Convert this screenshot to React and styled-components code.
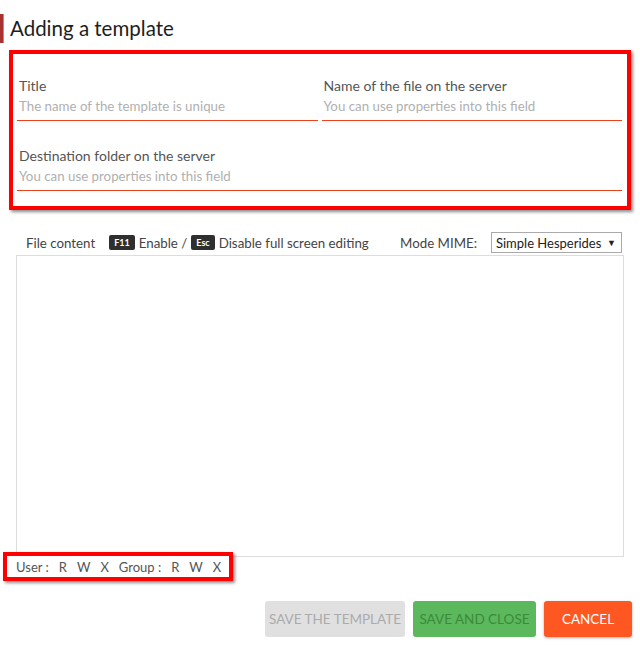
import styled, { createGlobalStyle } from 'styled-components';

const GlobalStyle = createGlobalStyle`
  html, body {
    margin: 0;
    padding: 0;
    background: #fff;
  }
  body {
    font-family: Lato, "Open Sans", sans-serif;
    color: #444;
  }
`;

const StyledDialog = styled.div`
  width: 640px;
  height: 645px;
  display: flex;
  flex-direction: column;
  box-sizing: border-box;
  overflow: hidden;
`;

const StyledHeader = styled.div`
  height: 50px;
  display: flex;
  align-items: flex-start;
  padding-top: 14px;
  box-sizing: border-box;
`;

const StyledMarker = styled.div`
  width: 3px;
  height: 29px;
  background: #a8322d;
  border-right: 1px solid #999;
  margin-right: 6px;
`;

const StyledTitle = styled.h1`
  margin: 0;
  font-size: 20.5px;
  font-weight: 400;
  color: #1e1e1e;
  line-height: 28px;
`;

const StyledHighlight = styled.div`
  border: 4px solid #ff0000;
  box-shadow: 2px 2px 3px rgba(0, 0, 0, 0.45);
  background: #fff;
`;

const StyledFormBox = styled(StyledHighlight)`
  margin: 0 9px;
  padding: 23px 5px 15px 4px;
  display: grid;
  grid-template-columns: 1fr 1fr;
  column-gap: 4px;
  row-gap: 26px;
`;

const StyledField = styled.div`
  grid-column: ${({ $wide }) => ($wide ? '1 / span 2' : 'auto')};
  border-bottom: 1px solid #e8431c;
  padding: 0 2px 5px;
`;

const StyledLabel = styled.div`
  font-size: 14px;
  line-height: 18px;
  color: #555;
`;

const StyledPlaceholder = styled.div`
  margin-top: 2px;
  font-size: 13.3px;
  line-height: 18px;
  color: #b0b0b0;
`;

const StyledToolRow = styled.div`
  display: flex;
  align-items: center;
  margin: 22px 18px 0 26px;
  height: 21px;
  font-size: 13.3px;
  color: #444;
  white-space: nowrap;
`;

const StyledKey = styled.span`
  display: inline-block;
  background: #2f2f2f;
  color: #fff;
  font-size: 9px;
  font-weight: 700;
  line-height: 15px;
  padding: 0 5px;
  border-radius: 2px;
  margin: 0 4px 0 ${({ $first }) => ($first ? '14px' : '4px')};
`;

const StyledSpacer = styled.div`
  flex: 1;
`;

const StyledSelect = styled.div`
  margin-left: 14px;
  width: 131px;
  height: 21px;
  box-sizing: border-box;
  border: 1px solid #aaa;
  display: flex;
  align-items: center;
  padding: 0 5px 0 4px;
  justify-content: space-between;
  color: #222;
  font-size: 13px;
`;

const StyledArrow = styled.span`
  font-size: 9px;
`;

const StyledEditor = styled.div`
  margin: 2px 16px 0 16px;
  height: 302px;
  border: 1px solid #ddd;
  box-sizing: border-box;
`;

const StyledPermBox = styled(StyledHighlight)`
  position: relative;
  margin: -5px 0 0 3px;
  width: 230px;
  height: 29px;
  box-sizing: border-box;
  display: flex;
  align-items: center;
  padding-left: 9px;
  font-size: 13px;
  color: #555;
  white-space: nowrap;
`;

const StyledPerm = styled.span`
  flex-shrink: 0;
  margin-right: ${({ $gap }) => $gap || '10px'};
`;

const StyledFooter = styled.div`
  display: flex;
  justify-content: flex-end;
  gap: 8px;
  margin: 20px 8px 0 0;
`;

const StyledButton = styled.div`
  width: ${({ $width }) => $width};
  height: 36px;
  display: flex;
  align-items: center;
  justify-content: center;
  border-radius: 3px;
  font-size: 13.5px;
  text-transform: uppercase;
  white-space: nowrap;
  background: ${({ $bg }) => $bg};
  color: ${({ $color }) => $color};
  box-shadow: ${({ $shadow }) => ($shadow ? '0 1px 3px rgba(0,0,0,0.3)' : 'none')};
`;

const Field = ({ label, placeholder, wide }) => (
  <StyledField $wide={wide}>
    <StyledLabel>{label}</StyledLabel>
    <StyledPlaceholder>{placeholder}</StyledPlaceholder>
  </StyledField>
);

const App = () => {
  return (
    <StyledDialog>
      <GlobalStyle />
      <StyledHeader>
        <StyledMarker />
        <StyledTitle>Adding a template</StyledTitle>
      </StyledHeader>
      <StyledFormBox>
        <Field label="Title" placeholder="The name of the template is unique" />
        <Field label="Name of the file on the server" placeholder="You can use properties into this field" />
        <Field wide label="Destination folder on the server" placeholder="You can use properties into this field" />
      </StyledFormBox>
      <StyledToolRow>
        File content
        <StyledKey $first>F11</StyledKey>
        Enable /
        <StyledKey>Esc</StyledKey>
        Disable full screen editing
        <StyledSpacer />
        Mode MIME:
        <StyledSelect>
          Simple Hesperides <StyledArrow>▼</StyledArrow>
        </StyledSelect>
      </StyledToolRow>
      <StyledEditor />
      <StyledPermBox>
        <StyledPerm>User :</StyledPerm>
        <StyledPerm>R</StyledPerm>
        <StyledPerm>W</StyledPerm>
        <StyledPerm>X</StyledPerm>
        <StyledPerm>Group :</StyledPerm>
        <StyledPerm>R</StyledPerm>
        <StyledPerm>W</StyledPerm>
        <StyledPerm $gap="0">X</StyledPerm>
      </StyledPermBox>
      <StyledFooter>
        <StyledButton $width="140px" $bg="#e0e0e0" $color="#ababab">Save the template</StyledButton>
        <StyledButton $width="123px" $bg="#5cb85c" $color="#3a8a3a">Save and close</StyledButton>
        <StyledButton $width="88px" $bg="#ff5722" $color="#fff" $shadow>Cancel</StyledButton>
      </StyledFooter>
    </StyledDialog>
  );
};

export default App;
